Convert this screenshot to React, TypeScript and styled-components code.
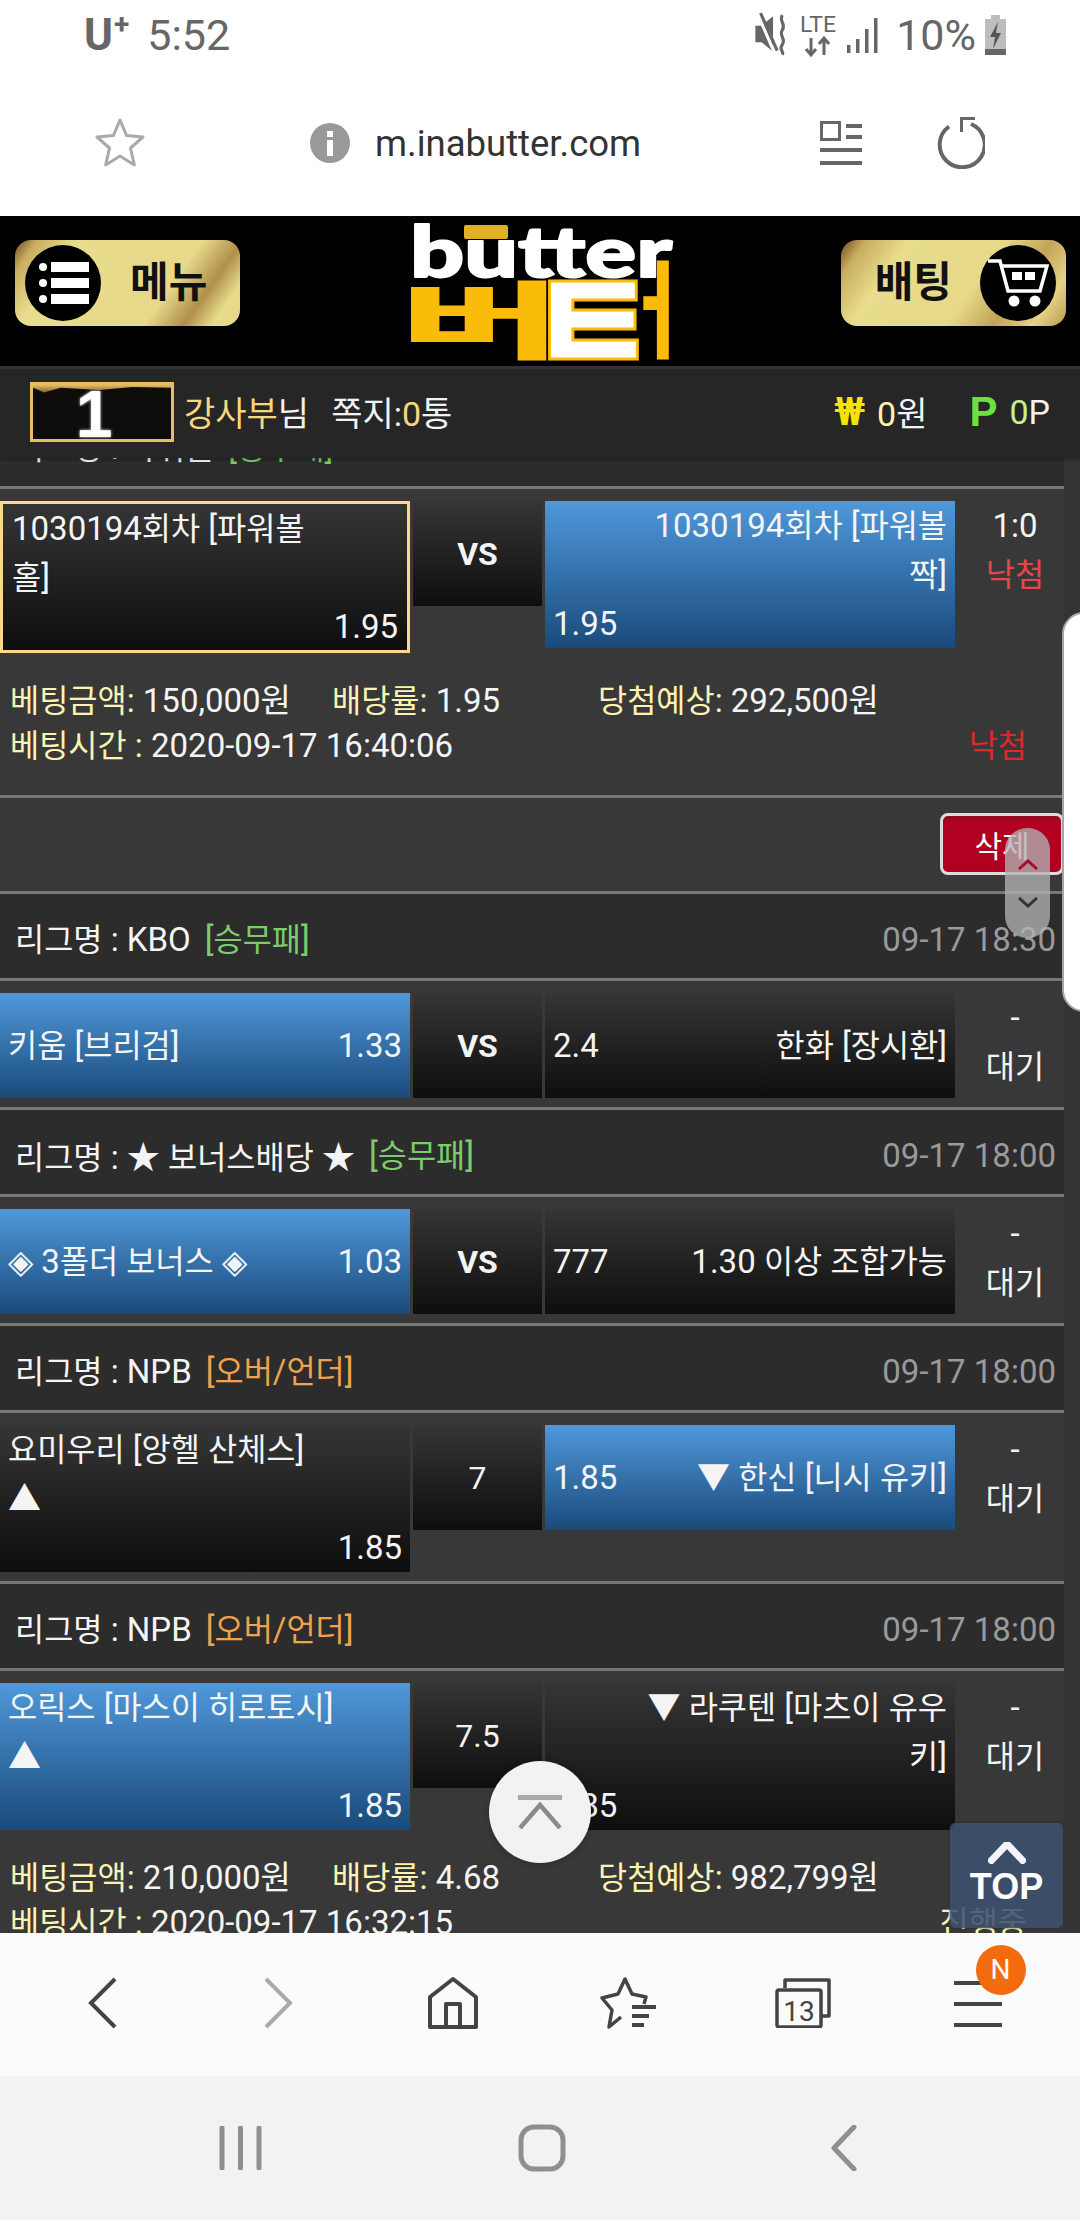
import React from 'react';
import styled, { createGlobalStyle } from 'styled-components';

const FONT = `Roboto, "Noto Sans CJK KR", sans-serif`;

const GlobalStyle = createGlobalStyle`
  html, body {
    margin: 0;
    padding: 0;
    background: #fff;
    font-family: ${FONT};
  }
`;

const Page = styled.div`
  position: relative;
  width: 1080px;
  height: 2220px;
  overflow: hidden;
  display: flex;
  flex-direction: column;
  font-family: ${FONT};
`;

/* status bar */

const StatusBar = styled.div`
  height: 70px;
  flex: none;
  background: #fff;
  display: flex;
  align-items: center;
  justify-content: space-between;
  padding: 0 72px 0 84px;
  color: #666;
  font-size: 43px;
`;

const StatusGroup = styled.div`
  display: flex;
  align-items: center;
`;

const Carrier = styled.span`
  font-weight: 700;
  margin-right: 18px;
  font-size: 44px;
  sup {
    font-size: 28px;
    line-height: 0;
    margin-left: 1px;
  }
`;

const Percent = styled.span`
  margin: 0 8px 0 15px;
`;

/* url bar */

const UrlBar = styled.div`
  height: 146px;
  flex: none;
  background: #fff;
  display: grid;
  grid-template-columns: 95px 50px 165px 1fr 44px 70px 52px 95px;
  grid-template-areas: '. star . url doc . reload .';
  align-items: center;
`;

const UrlText = styled.div`
  grid-area: url;
  display: flex;
  align-items: center;
  gap: 25px;
  font-size: 36.5px;
  color: #333;
`;

/* site header */

const Header = styled.div`
  height: 150px;
  flex: none;
  box-sizing: border-box;
  background: #000;
  display: flex;
  align-items: flex-start;
  justify-content: space-between;
  padding: 24px 14px 0 15px;
  position: relative;
`;

const GoldButton = styled.div<{ $flip?: boolean }>`
  width: 225px;
  height: 86px;
  border-radius: 16px;
  display: flex;
  align-items: center;
  flex-direction: ${(p) => (p.$flip ? 'row-reverse' : 'row')};
  gap: ${(p) => (p.$flip ? '28px' : '29px')};
  padding: ${(p) => (p.$flip ? '0 10px 0 32px' : '0 0 0 10px')};
  box-sizing: border-box;
  justify-content: flex-start;
  background: ${(p) =>
    p.$flip
      ? 'linear-gradient(125deg, #6f4a1e 0%, #c9ae62 9%, #e8dd8c 24%, #e6d98a 58%, #c2a457 74%, #e4d485 88%, #b89a50 100%)'
      : 'linear-gradient(125deg, #6f4a1e 0%, #c9ae62 8%, #e8dd8c 22%, #e6d98a 66%, #b0904a 80%, #e8dc8c 90%, #e4d685 100%)'};
  color: #111;
  font-size: 42px;
  font-weight: 700;
  line-height: 1;
`;

const IconDisc = styled.div`
  width: 76px;
  height: 76px;
  border-radius: 50%;
  background: #000;
  flex: none;
  display: flex;
  align-items: center;
  justify-content: center;
`;

const Logo = styled.svg`
  position: absolute;
  left: 400px;
  top: 0;
`;

/* user bar */

const UserBar = styled.div`
  height: 92px;
  flex: none;
  background: #262626;
  border-top: 3px solid #333;
  box-sizing: border-box;
  display: flex;
  align-items: center;
  padding: 0 30px 4px 30px;
  font-size: 34px;
  color: #f2f2f2;
  z-index: 1;
  box-shadow: 0 2px 3px rgba(0, 0, 0, 0.25);
`;

const LevelBadge = styled.div`
  position: relative;
  width: 144px;
  height: 60px;
  box-sizing: border-box;
  border: 3px solid #e7bc62;
  padding-right: 16px;
  background: #0f0d0b;
  color: #fff;
  font-family: "Liberation Sans", sans-serif;
  font-size: 66px;
  font-weight: 700;
  line-height: 58px;
  text-align: center;
  text-shadow: 0 0 3px #fff;
  overflow: hidden;
  margin-right: 10px;
  flex: none;
  &::before {
    content: '';
    position: absolute;
    left: 0;
    right: 0;
    top: 0;
    height: 8px;
    background: linear-gradient(#e7bc62, #7c5a22);
    clip-path: polygon(0 0, 100% 0, 100% 40%, 72% 30%, 48% 70%, 20% 40%, 8% 100%, 0 40%);
  }
`;

const Gold = styled.span`
  color: #f7d77e;
`;

const UserMessage = styled.span`
  margin-left: 22px;
`;

const Wallet = styled.div`
  margin-left: auto;
  display: flex;
  align-items: center;
`;

const WonSign = styled.span`
  color: #f5e400;
  font-weight: 700;
  font-size: 38px;
  margin-right: 12px;
`;

const PointSign = styled.span`
  color: #6ee23c;
  font-weight: 700;
  font-size: 42px;
  margin: 0 12px 0 42px;
  font-family: "Liberation Sans", sans-serif;
`;

const PaleYellow = styled.span`
  color: #fdf3b0;
`;

const PaleGreen = styled.span`
  color: #c4f08e;
`;

/* bet list */

const Content = styled.div`
  flex: 1;
  min-height: 0;
  overflow: hidden;
  background: #343434;
`;

const List = styled.div`
  width: 1064px;
  margin-top: -56px;
  font-size: 33px;
  color: #f4f4f4;
`;

const Hangul = styled.span`
  font-size: 31.7px;
  line-height: 1;
`;

const LeagueRow = styled.div`
  height: 87px;
  box-sizing: border-box;
  padding: 6px 8px 0 15px;
  background: #2c2c2c;
  border-bottom: 3px solid #777;
  display: flex;
  align-items: center;
  gap: 14px;
  white-space: pre;
`;

const LeagueTag = styled.span<{ $tone: 'green' | 'orange' }>`
  color: ${(p) => (p.$tone === 'green' ? '#7ccb6c' : '#f0a24e')};
`;

const LeagueTime = styled.span`
  margin-left: auto;
  color: #9a9a9a;
`;

const MatchBlock = styled.div<{ $closed: boolean }>`
  background: #383838;
  padding: 12px 0 ${(p) => (p.$closed ? '9px' : '0')};
  border-bottom: ${(p) => (p.$closed ? '3px solid #777' : 'none')};
`;

const MatchGrid = styled.div`
  display: grid;
  grid-template-columns: 410px 129px 410px 106px;
  column-gap: 3px;
  align-items: start;
`;

const TeamBox = styled.div<{ $active: boolean; $selected: boolean; $tall: boolean }>`
  box-sizing: border-box;
  height: ${(p) => (p.$selected ? '152px' : p.$tall ? '147px' : '105px')};
  background: ${(p) =>
    p.$active
      ? 'linear-gradient(#4f98da, #1a4a7b)'
      : 'linear-gradient(#353535, #0e0e0e)'};
  border: ${(p) => (p.$selected ? '3px solid #fdd88a' : 'none')};
  padding: 0 ${(p) => (p.$selected ? '9px' : '8px')};
  line-height: 49px;
  white-space: pre;
  display: flex;
  ${(p) =>
    p.$tall
      ? 'flex-direction: column;'
      : 'align-items: center; justify-content: space-between;'}
`;

const TallLine = styled.div<{ $right: boolean }>`
  text-align: ${(p) => (p.$right ? 'right' : 'left')};
`;

const CenterBox = styled.div<{ $bold: boolean }>`
  height: 105px;
  background: linear-gradient(#353535, #0e0e0e);
  display: flex;
  align-items: center;
  justify-content: center;
  font-size: 32px;
  font-weight: ${(p) => (p.$bold ? 700 : 400)};
`;

const StatusCol = styled.div`
  line-height: 49px;
  text-align: center;
  padding-left: 8px;
`;

const Red = styled.div`
  color: #e5474b;
`;

const Info = styled.div`
  background: #383838;
  padding: 25px 37px 27px 10px;
  line-height: 45px;
  border-bottom: 3px solid #777;
`;

const OpenInfo = styled(Info)`
  border-bottom: none;
`;

const InfoLine = styled.div`
  display: grid;
  grid-template-columns: 322px 266px 1fr;
  white-space: pre;
`;

const InfoTime = styled.div`
  display: flex;
  justify-content: space-between;
  white-space: pre;
`;

const Label = styled.span`
  color: #fbf3b4;
`;

const LostText = styled.span`
  color: #d92b2b;
`;

const ActionRow = styled.div`
  height: 96px;
  box-sizing: border-box;
  background: #383838;
  border-bottom: 3px solid #777;
  padding-top: 15px;
  display: flex;
  justify-content: flex-end;
`;

const DeleteButton = styled.div`
  width: 124px;
  height: 62px;
  box-sizing: border-box;
  border: 3px solid #ddd;
  border-radius: 8px;
  background: linear-gradient(#8f0a20 0, #b30221 12%, #b00020 100%);
  color: #fff;
  font-size: 30px;
  display: flex;
  align-items: center;
  justify-content: center;
`;

/* browser toolbars */

const BottomBar = styled.div`
  height: 143px;
  flex: none;
  background: #fbfbfb;
  display: grid;
  grid-template-columns: repeat(6, 175px);
  padding: 0 15px 4px;
  justify-items: center;
  align-items: center;
  box-sizing: border-box;
  position: relative;
  z-index: 2;
`;

const NavBar = styled.div`
  height: 144px;
  flex: none;
  background: #f2f2f2;
  display: grid;
  grid-template-columns: repeat(3, 302px);
  padding: 0 85px 0 89px;
  box-sizing: border-box;
  justify-items: center;
  align-items: center;
`;

const MenuIconWrap = styled.div`
  position: relative;
`;

const NewBadge = styled.div`
  position: absolute;
  right: -24px;
  top: -34px;
  width: 50px;
  height: 50px;
  border-radius: 50%;
  background: #f26b0f;
  color: #fff;
  font-size: 28px;
  display: flex;
  align-items: center;
  justify-content: center;
`;

/* floating things on top of the page */

const EdgePanel = styled.div`
  position: absolute;
  right: -20px;
  top: 612px;
  width: 34px;
  height: 396px;
  background: #fff;
  border: 2px solid #a5a5a5;
  border-radius: 22px 0 0 22px;
  z-index: 3;
`;

const ScrollPill = styled.div`
  position: absolute;
  left: 1005px;
  top: 828px;
  width: 45px;
  height: 110px;
  border-radius: 22px;
  background: rgba(178, 178, 178, 0.78);
  z-index: 3;
  display: flex;
  flex-direction: column;
  align-items: center;
  justify-content: flex-end;
  gap: 27px;
  padding-bottom: 30px;
  box-sizing: border-box;
`;

const ScrollTopCircle = styled.div`
  position: absolute;
  left: 489px;
  top: 1761px;
  width: 102px;
  height: 102px;
  border-radius: 50%;
  background: #f2f2f2;
  box-shadow: 0 1px 6px rgba(0, 0, 0, 0.25);
  z-index: 3;
  display: flex;
  align-items: center;
  justify-content: center;
`;

const TopButton = styled.div`
  position: absolute;
  left: 950px;
  top: 1823px;
  width: 113px;
  height: 105px;
  border-radius: 5px;
  background: rgba(60, 80, 110, 0.88);
  box-shadow: 0 0 2px #222;
  z-index: 3;
  color: #fff;
  font-family: "Liberation Sans", sans-serif;
  font-weight: 700;
  font-size: 36px;
  line-height: 1;
  display: flex;
  flex-direction: column;
  align-items: center;
  padding-top: 19px;
  box-sizing: border-box;
  gap: 5px;
`;

interface Side {
  lines: string[];
  odds: string;
  active?: boolean;
  selected?: boolean;
}

interface Bet {
  key: string;
  league: string;
  tag: string;
  tone: 'green' | 'orange';
  time?: string;
  left: Side;
  center: string;
  right: Side;
  score: string;
  result: string;
  lost?: boolean;
}

const BETS: Bet[] = [
  {
    key: 'kbo',
    league: '리그명 : KBO',
    tag: '[승무패]',
    tone: 'green',
    time: '09-17 18:30',
    left: { lines: ['키움 [브리검]'], odds: '1.33', active: true },
    center: 'VS',
    right: { lines: ['한화 [장시환]'], odds: '2.4' },
    score: '-',
    result: '대기',
  },
  {
    key: 'bonus',
    league: '리그명 : ★ 보너스배당 ★',
    tag: '[승무패]',
    tone: 'green',
    time: '09-17 18:00',
    left: { lines: ['◈ 3폴더 보너스 ◈'], odds: '1.03', active: true },
    center: 'VS',
    right: { lines: ['1.30 이상 조합가능'], odds: '777' },
    score: '-',
    result: '대기',
  },
  {
    key: 'npb1',
    league: '리그명 : NPB',
    tag: '[오버/언더]',
    tone: 'orange',
    time: '09-17 18:00',
    left: { lines: ['요미우리 [앙헬 산체스]', '▲'], odds: '1.85' },
    center: '7',
    right: { lines: ['▼ 한신 [니시 유키]'], odds: '1.85', active: true },
    score: '-',
    result: '대기',
  },
];

// the phone's hangul runs a little smaller than its digits
const ko = (text: string): React.ReactNode =>
  text.split(/([가-힣]+)/).map((part, i) =>
    i % 2 === 1 ? <Hangul key={i}>{part}</Hangul> : part
  );

const TeamCell = ({ side, isRight }: { side: Side; isRight: boolean }): JSX.Element => {
  const tall = side.lines.length > 1;
  if (tall) {
    return (
      <TeamBox $active={!!side.active} $selected={!!side.selected} $tall>
        {side.lines.map((line) => (
          <TallLine key={line} $right={isRight}>
            {ko(line)}
          </TallLine>
        ))}
        <TallLine $right={!isRight}>{side.odds}</TallLine>
      </TeamBox>
    );
  }
  return (
    <TeamBox $active={!!side.active} $selected={false} $tall={false}>
      {isRight ? <span>{side.odds}</span> : <span>{ko(side.lines[0])}</span>}
      {isRight ? <span>{ko(side.lines[0])}</span> : <span>{side.odds}</span>}
    </TeamBox>
  );
};

const Match = ({ bet, closed }: { bet: Bet; closed: boolean }): JSX.Element => (
  <MatchBlock $closed={closed}>
    <MatchGrid>
      <TeamCell side={bet.left} isRight={false} />
      <CenterBox $bold={bet.center === 'VS'}>{bet.center}</CenterBox>
      <TeamCell side={bet.right} isRight />
      <StatusCol>
        {bet.score}
        {bet.lost ? <Red>{ko(bet.result)}</Red> : <div>{ko(bet.result)}</div>}
      </StatusCol>
    </MatchGrid>
  </MatchBlock>
);

const League = ({ name, tag, tone, time }: { name: string; tag: string; tone: 'green' | 'orange'; time?: string }): JSX.Element => (
  <LeagueRow>
    <span>{ko(name)}</span>
    <LeagueTag $tone={tone}>{ko(tag)}</LeagueTag>
    {time && <LeagueTime>{time}</LeagueTime>}
  </LeagueRow>
);

const Amounts = ({ stake, rate, win }: { stake: string; rate: string; win: string }): JSX.Element => (
  <InfoLine>
    <span>
      <Label>{ko('베팅금액:')}</Label> {stake}
    </span>
    <span>
      <Label>{ko('배당률:')}</Label> {rate}
    </span>
    <span>
      <Label>{ko('당첨예상:')}</Label> {win}
    </span>
  </InfoLine>
);

const Chevron = ({ up, color, w = 20, h = 11, sw = 3 }: { up: boolean; color: string; w?: number; h?: number; sw?: number }): JSX.Element => (
  <svg width={w} height={h} viewBox={`0 0 ${w} ${h}`}>
    <polyline
      points={up ? `1,${h - 1} ${w / 2},2 ${w - 1},${h - 1}` : `1,1 ${w / 2},${h - 2} ${w - 1},1`}
      fill="none"
      stroke={color}
      strokeWidth={sw}
    />
  </svg>
);

const ButterLogo = (): JSX.Element => (
  <Logo width={300} height={150} viewBox="0 0 300 150">
    <rect x={64} y={9} width={44} height={14} rx={2} fill="#e2b024" />
    <text
      x={10}
      y={61}
      fontFamily="Lato, sans-serif"
      fontWeight={900}
      fontSize={70}
      fill="#fff"
      stroke="#fff"
      strokeWidth={2}
      strokeLinejoin="round"
      textLength={262}
      lengthAdjust="spacingAndGlyphs"
    >
      butter
    </text>
    <g fontFamily={`"Noto Sans CJK KR", sans-serif`} fontWeight={900}>
      <text x={-1} y={136} fontSize={84} fill="#fbbc09" textLength={163} lengthAdjust="spacingAndGlyphs">
        버
      </text>
      <text
        x={127}
        y={161}
        fontSize={149}
        fill="#fff"
        stroke="#fbbc09"
        strokeWidth={3}
        textLength={133}
        lengthAdjust="spacingAndGlyphs"
      >
        ㅌ
      </text>
      <text x={222} y={133} fontSize={105} fill="#fbbc09" textLength={68} lengthAdjust="spacingAndGlyphs">
        ㅓ
      </text>
    </g>
  </Logo>
);

const App = (): JSX.Element => {
  return (
    <Page>
      <GlobalStyle />
      <StatusBar>
        <StatusGroup>
          <Carrier>
            U<sup>+</sup>
          </Carrier>
          <span>5:52</span>
        </StatusGroup>
        <StatusGroup>
          <svg width={38} height={52} viewBox="0 0 34 50">
            <path d="M1 16h6l11-9v34L7 32H1z" fill="#666" />
            <line x1={3} y1={4} x2={21} y2={46} stroke="#fff" strokeWidth={3} />
            <line x1={6} y1={4} x2={22} y2={40} stroke="#666" strokeWidth={3} />
            <path d="M27 6c-4 6 4 8 0 14s4 8 0 14 2 6 0 10" fill="none" stroke="#666" strokeWidth={3} />
          </svg>
          <svg width={48} height={50} viewBox="0 0 48 50">
            <text x={9} y={22} fontFamily="Roboto, sans-serif" fontSize={22} fill="#666" textLength={36} lengthAdjust="spacingAndGlyphs">
              LTE
            </text>
            <path d="M20 28v16M15 39l5 6 5-6M33 45V29M28 34l5-6 5 6" fill="none" stroke="#666" strokeWidth={3} />
          </svg>
          <svg width={40} height={40} viewBox="0 0 40 40" style={{ marginLeft: 2 }}>
            <path d="M6 30h3.500v8H6zM15 24h3.500v14H15zM24 14h3.500v24H24zM33 3h3.500v35H33z" fill="#666" />
          </svg>
          <Percent>10%</Percent>
          <svg width={24} height={40} viewBox="0 0 24 40">
            <path d="M7 0h9v4h6v36H1V4h6z" fill="#bdbdbd" />
            <rect x={1} y={34} width={21} height={6} fill="#666" />
            <path d="M14 7L6 22h5l-2 12 8-16h-5z" fill="#555" />
          </svg>
        </StatusGroup>
      </StatusBar>

      <UrlBar>
        <svg width={50} height={52} viewBox="0 0 50 52" style={{ gridArea: 'star' }}>
          <path d="M25 3l6.600 15.600 16.400 1.400-12.500 11 3.800 17L25 39l-14.300 9 3.800-17L2 20l16.400-1.400z" fill="none" stroke="#aaa" strokeWidth={3} strokeLinejoin="round" />
        </svg>
        <UrlText>
          <svg width={40} height={40} viewBox="0 0 40 40">
            <circle cx={20} cy={20} r={20} fill="#999" />
            <rect x={17} y={17} width={6} height={16} fill="#fff" />
            <rect x={17} y={8} width={6} height={6} fill="#fff" />
          </svg>
          m.inabutter.com
        </UrlText>
        <svg width={44} height={44} viewBox="0 0 42 44" style={{ gridArea: 'doc' }}>
          <path d="M1.500 1.500h18v17h-18z" fill="none" stroke="#666" strokeWidth={3} />
          <path d="M26 3h16v4H26zM26 14h16v4H26zM0 27h42v4H0zM0 40h42v4H0z" fill="#666" />
        </svg>
        <svg width={52} height={52} viewBox="0 0 52 52" style={{ gridArea: 'reload' }}>
          <path d="M16 9.500A22.500 22.500 0 1 0 38 7" fill="none" stroke="#666" strokeWidth={4} />
          <path d="M27 0h15v3H30v12h-3z" fill="#666" />
        </svg>
      </UrlBar>

      <Header>
        <GoldButton>
          <IconDisc>
            <svg width={52} height={48} viewBox="0 0 52 48">
              <g fill="#fff">
                <circle cx={6} cy={8} r={4} />
                <circle cx={6} cy={24} r={4} />
                <circle cx={6} cy={40} r={4} />
                <rect x={14} y={3} width={38} height={10} />
                <rect x={14} y={19} width={38} height={10} />
                <rect x={14} y={35} width={38} height={10} />
              </g>
            </svg>
          </IconDisc>
          <span>메뉴</span>
        </GoldButton>
        <ButterLogo />
        <GoldButton $flip>
          <IconDisc>
            <svg width={62} height={50} viewBox="0 0 62 50">
              <path d="M1 3h12l8 30h32L60 8H15" fill="none" stroke="#fff" strokeWidth={3.500} />
              <path d="M25 14h10v8H25zM38 14h10v8H38z" fill="#fff" />
              <circle cx={27} cy={43} r={5.500} fill="#fff" />
              <circle cx={48} cy={43} r={5.500} fill="#fff" />
            </svg>
          </IconDisc>
          <span>배팅</span>
        </GoldButton>
      </Header>

      <UserBar>
        <LevelBadge>1</LevelBadge>
        <span>
          <Gold>강사부</Gold>님
        </span>
        <UserMessage>
          쪽지:<Gold>0</Gold>통
        </UserMessage>
        <Wallet>
          <WonSign>₩</WonSign>
          <span>
            <PaleYellow>0</PaleYellow>원
          </span>
          <PointSign>P</PointSign>
          <span>
            <PaleGreen>0</PaleGreen>P
          </span>
        </Wallet>
      </UserBar>

      <Content>
        <List>
          <League name="리그명 : 파워볼" tag="[승무패]" tone="green" />
          <Match
            closed={false}
            bet={{
              key: 'power',
              league: '',
              tag: '',
              tone: 'green',
              left: { lines: ['1030194회차 [파워볼', '홀]'], odds: '1.95', selected: true },
              center: 'VS',
              right: { lines: ['1030194회차 [파워볼', '짝]'], odds: '1.95', active: true },
              score: '1:0',
              result: '낙첨',
              lost: true,
            }}
          />
          <Info>
            <Amounts stake="150,000원" rate="1.95" win="292,500원" />
            <InfoTime>
              <span>
                <Label>{ko('베팅시간 :')}</Label> 2020-09-17 16:40:06
              </span>
              <LostText>{ko('낙첨')}</LostText>
            </InfoTime>
          </Info>
          <ActionRow>
            <DeleteButton>삭제</DeleteButton>
          </ActionRow>

          {BETS.map((bet) => (
            <React.Fragment key={bet.key}>
              <League name={bet.league} tag={bet.tag} tone={bet.tone} time={bet.time} />
              <Match bet={bet} closed />
            </React.Fragment>
          ))}

          <League name="리그명 : NPB" tag="[오버/언더]" tone="orange" time="09-17 18:00" />
          <Match
            closed={false}
            bet={{
              key: 'npb2',
              league: '',
              tag: '',
              tone: 'orange',
              left: { lines: ['오릭스 [마스이 히로토시]', '▲'], odds: '1.85', active: true },
              center: '7.5',
              right: { lines: ['▼ 라쿠텐 [마츠이 유우', '키]'], odds: '1.85' },
              score: '-',
              result: '대기',
            }}
          />
          <OpenInfo>
            <Amounts stake="210,000원" rate="4.68" win="982,799원" />
            <InfoTime>
              <span>
                <Label>{ko('베팅시간 :')}</Label> 2020-09-17 16:32:15
              </span>
              <Label>{ko('진행중')}</Label>
            </InfoTime>
          </OpenInfo>
        </List>
      </Content>

      <BottomBar>
        <svg width={30} height={52} viewBox="0 0 30 52">
          <polyline points="27,2 3,26 27,50" fill="none" stroke="#444" strokeWidth={4} />
        </svg>
        <svg width={30} height={52} viewBox="0 0 30 52">
          <polyline points="3,2 27,26 3,50" fill="none" stroke="#aaa" strokeWidth={4} />
        </svg>
        <svg width={50} height={52} viewBox="0 0 50 52">
          <path d="M2 20L25 2l23 18v30H2zM18 50V27h14v23" fill="none" stroke="#444" strokeWidth={4} strokeLinejoin="round" />
        </svg>
        <svg width={56} height={52} viewBox="0 0 56 52">
          <path d="M44 27l2-7-14-3L25 2l-7 15-16 4 10 12-3 17 12-10" fill="none" stroke="#444" strokeWidth={3.500} strokeLinejoin="round" />
          <path d="M32 28h24v4H32zM32 37h17v4H32zM32 46h12v4H32z" fill="#444" />
        </svg>
        <svg width={56} height={50} viewBox="0 0 56 50">
          <path d="M10 10V2h44v36h-8" fill="none" stroke="#444" strokeWidth={3.500} strokeLinejoin="round" />
          <rect x={2} y={12} width={44} height={37} rx={2} fill="#fbfbfb" stroke="#444" strokeWidth={3.500} />
          <text x={24} y={43} textAnchor="middle" fontFamily="Roboto, sans-serif" fontSize={28} fill="#444">
            13
          </text>
        </svg>
        <MenuIconWrap>
          <svg width={48} height={48} viewBox="0 0 48 48" style={{ display: 'block' }}>
            <path d="M0 2h48v4H0zM0 23h48v4H0zM0 44h48v4H0z" fill="#444" />
          </svg>
          <NewBadge>N</NewBadge>
        </MenuIconWrap>
      </BottomBar>

      <NavBar>
        <svg width={43} height={44} viewBox="0 0 43 44">
          <path d="M3 2v40M21.500 2v40M40 2v40" fill="none" stroke="#8f8f8f" strokeWidth={5} strokeLinecap="round" />
        </svg>
        <svg width={48} height={48} viewBox="0 0 48 48">
          <rect x={3} y={3} width={42} height={42} rx={13} fill="none" stroke="#8f8f8f" strokeWidth={5} />
        </svg>
        <svg width={26} height={46} viewBox="0 0 26 46">
          <polyline points="23,2 3,23 23,44" fill="none" stroke="#8f8f8f" strokeWidth={5} strokeLinecap="round" strokeLinejoin="round" />
        </svg>
      </NavBar>

      <EdgePanel />
      <ScrollPill>
        <Chevron up color="#a01028" />
        <Chevron up={false} color="#333" />
      </ScrollPill>
      <ScrollTopCircle>
        <svg width={44} height={34} viewBox="0 0 44 34">
          <rect x={0} y={0} width={44} height={5} fill="#aaa" />
          <polyline points="2,33 22,10 42,33" fill="none" stroke="#8a8a8a" strokeWidth={4.500} />
        </svg>
      </ScrollTopCircle>
      <TopButton>
        <Chevron up color="#f2f4f8" w={38} h={22} sw={7} />
        <span>TOP</span>
      </TopButton>
    </Page>
  );
};

export default App;
